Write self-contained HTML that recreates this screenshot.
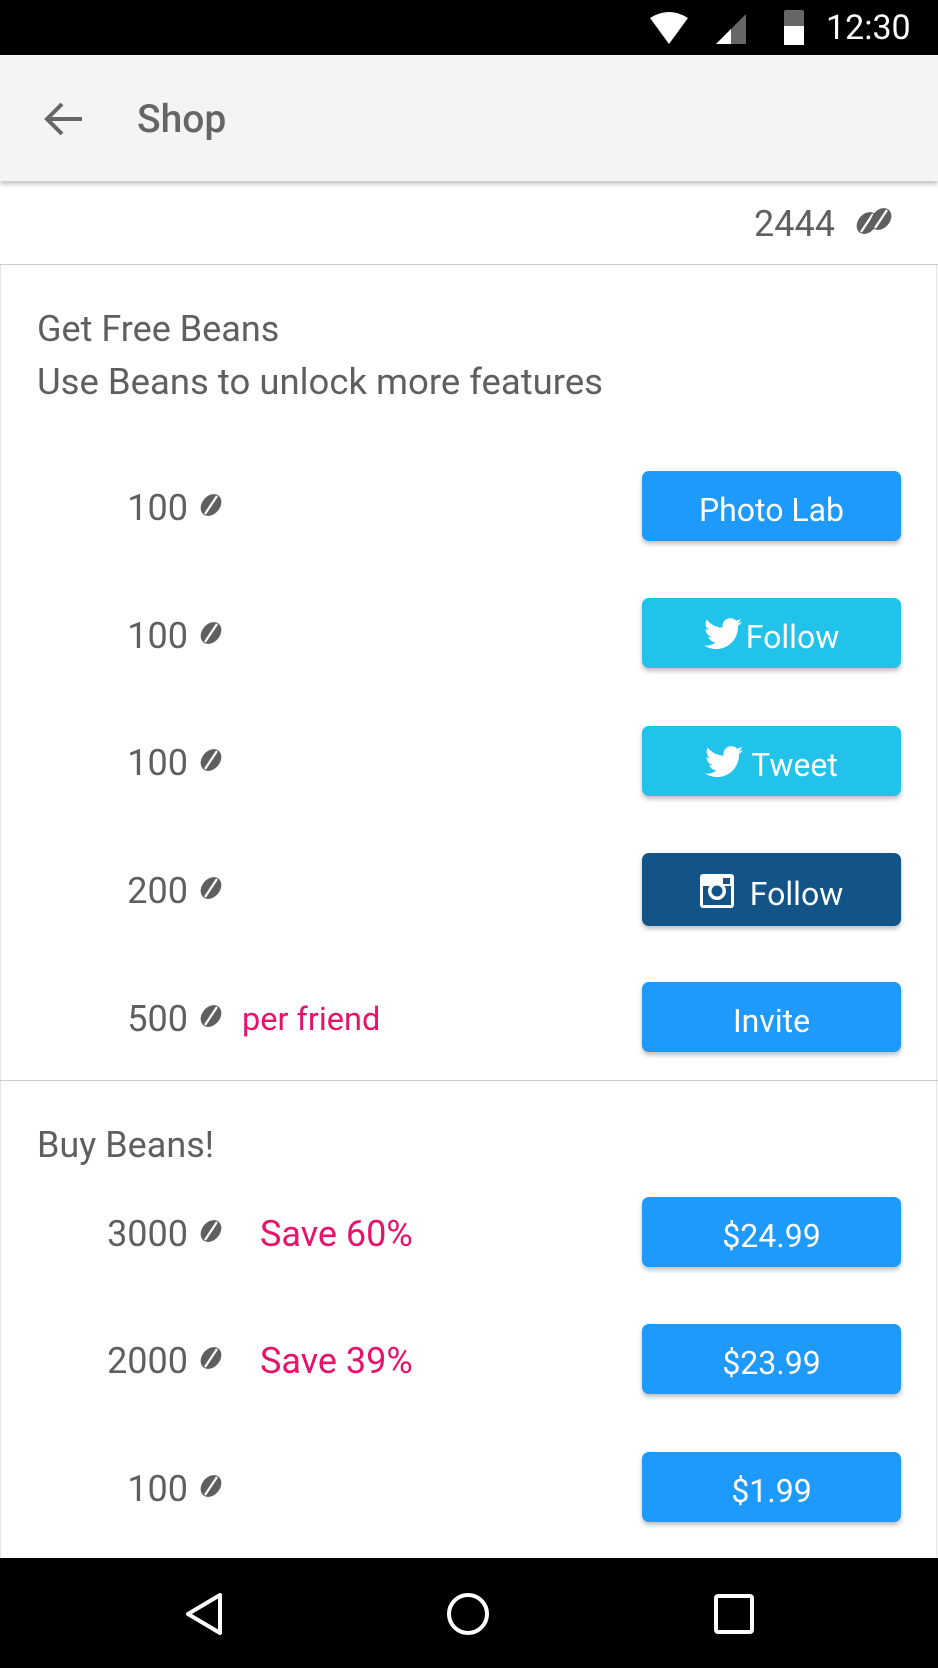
<!DOCTYPE html>
<html><head><meta charset="utf-8"><style>
*{margin:0;padding:0;box-sizing:border-box}
body{width:938px;height:1668px;overflow:hidden;background:#fff;font-family:"Roboto","Liberation Sans",sans-serif;color:#5f5f5f;position:relative}
.abs{position:absolute}
.status{left:0;top:0;width:938px;height:55px;background:#000}
.appbar{left:0;top:55px;width:938px;height:126px;background:#f4f4f4;box-shadow:0 3px 5px rgba(0,0,0,.25)}
.num{font-size:36px;line-height:40px;text-align:right;width:150px;left:38px}
.btn{left:642px;width:259px;height:70px;border-radius:7px;color:#fff;font-size:32px;display:flex;align-items:center;justify-content:center;box-shadow:0 3px 5px rgba(0,0,0,.25);padding-top:8px}
.blue{background:#1e9afc}.tw{background:#22c3eb}.ig{background:#135488}
.pink{color:#e8126b;font-size:36px;line-height:40px}
.nav{left:0;top:1558px;width:938px;height:110px;background:#000}
</style></head><body>
<svg width="0" height="0" style="position:absolute"><defs><g id="b"><ellipse cx="13" cy="11" rx="12" ry="9" transform="rotate(-50 13 11)" fill="#5f5f5f"/><path d="M7 20 L19 2" stroke="#fff" stroke-width="2.2"/></g></defs></svg>
<div class="abs status">
<svg class="abs" style="left:650px;top:12px" width="38" height="32" viewBox="0 0 38 32"><path d="M0 6 Q19 -6 38 6 L19 32 Z" fill="#fff"/></svg>
<svg class="abs" style="left:716px;top:14px" width="30" height="30" viewBox="0 0 30 30"><path d="M30 0 V30 H0 Z" fill="#666"/><path d="M15 15 V30 H0 Z" fill="#fff"/></svg>
<div class="abs" style="left:784px;top:10px;width:20px;height:35px;background:#666;border-radius:2px"></div>
<div class="abs" style="left:784px;top:26px;width:20px;height:19px;background:#fff"></div>
<div class="abs" style="left:826px;top:8px;font-size:34px;color:#fff;line-height:40px">12:30</div>
</div>
<div class="abs appbar">
<svg class="abs" style="left:44px;top:46px" width="40" height="36" viewBox="0 0 40 36"><path d="M38 18 H4 M18 3 L3 18 L18 33" stroke="#666" stroke-width="4" fill="none"/></svg>
<div class="abs" style="left:137px;top:44px;font-size:39px;font-weight:500;color:#666;line-height:40px">Shop</div>
</div>
<div class="abs" style="left:754px;top:204px;font-size:36px;line-height:40px">2444</div>
<svg class="abs" style="left:854px;top:208px" width="42" height="28" viewBox="0 0 42 28"><use href="#b" x="0" y="4"/><use href="#b" x="14" y="0"/></svg>
<div class="abs" style="left:0;top:264px;width:938px;height:1px;background:#ccc"></div>
<div class="abs" style="left:0;top:265px;width:937px;height:1300px;border-left:1px solid #e4e4e4;border-right:1px solid #e4e4e4"></div>
<div class="abs" style="left:37px;top:309px;font-size:36px;line-height:40px">Get Free Beans</div>
<div class="abs" style="left:37px;top:362px;font-size:36.5px;line-height:40px">Use Beans to unlock more features</div>

<div class="abs num" style="top:488px">100</div><svg class="abs" style="left:198px;top:494px" width="26" height="22"><use href="#b"/></svg>
<div class="abs btn blue" style="top:471px">Photo Lab</div>

<div class="abs num" style="top:616px">100</div><svg class="abs" style="left:198px;top:622px" width="26" height="22"><use href="#b"/></svg>
<div class="abs btn tw" style="top:598px"><svg width="38" height="32" viewBox="0 0 24 20" style="margin-right:4px;margin-top:-6px"><path fill="#fff" d="M24 2.4a10 10 0 0 1-2.8.8A5 5 0 0 0 23.3.4a10 10 0 0 1-3.1 1.2A4.9 4.9 0 0 0 11.8 6 14 14 0 0 1 1.7.9a4.9 4.9 0 0 0 1.5 6.6A4.9 4.9 0 0 1 1 6.9a4.9 4.9 0 0 0 3.9 4.9 5 5 0 0 1-2.2.1 4.9 4.9 0 0 0 4.6 3.4A9.9 9.9 0 0 1 0 17.3 14 14 0 0 0 7.5 19.5c9.1 0 14-7.5 14-14v-.6A10 10 0 0 0 24 2.4z"/></svg>Follow</div>

<div class="abs num" style="top:743px">100</div><svg class="abs" style="left:198px;top:749px" width="26" height="22"><use href="#b"/></svg>
<div class="abs btn tw" style="top:726px"><svg width="38" height="32" viewBox="0 0 24 20" style="margin-right:8px;margin-top:-6px"><path fill="#fff" d="M24 2.4a10 10 0 0 1-2.8.8A5 5 0 0 0 23.3.4a10 10 0 0 1-3.1 1.2A4.9 4.9 0 0 0 11.8 6 14 14 0 0 1 1.7.9a4.9 4.9 0 0 0 1.5 6.6A4.9 4.9 0 0 1 1 6.9a4.9 4.9 0 0 0 3.9 4.9 5 5 0 0 1-2.2.1 4.9 4.9 0 0 0 4.6 3.4A9.9 9.9 0 0 1 0 17.3 14 14 0 0 0 7.5 19.5c9.1 0 14-7.5 14-14v-.6A10 10 0 0 0 24 2.4z"/></svg>Tweet</div>

<div class="abs num" style="top:871px">200</div><svg class="abs" style="left:198px;top:877px" width="26" height="22"><use href="#b"/></svg>
<div class="abs btn ig" style="top:853px;height:73px"><svg width="34" height="34" viewBox="0 0 34 34" style="margin-right:16px;margin-top:-6px"><rect x="0" y="0" width="34" height="34" rx="3" fill="#fff"/><rect x="3" y="12" width="28" height="19" fill="#135488"/><circle cx="17" cy="17" r="9" fill="#fff"/><circle cx="17" cy="17" r="5.5" fill="#135488"/><rect x="23" y="4" width="7" height="6" fill="#135488"/></svg>Follow</div>

<div class="abs num" style="top:999px">500</div><svg class="abs" style="left:198px;top:1005px" width="26" height="22"><use href="#b"/></svg>
<div class="abs pink" style="left:242px;top:999px;font-size:32.5px">per friend</div>
<div class="abs btn blue" style="top:982px">Invite</div>

<div class="abs" style="left:0;top:1080px;width:938px;height:1px;background:#ccc"></div>
<div class="abs" style="left:37px;top:1125px;font-size:36px;line-height:40px">Buy Beans!</div>

<div class="abs num" style="top:1214px">3000</div><svg class="abs" style="left:198px;top:1220px" width="26" height="22"><use href="#b"/></svg>
<div class="abs pink" style="left:260px;top:1214px">Save 60%</div>
<div class="abs btn blue" style="top:1197px">$24.99</div>

<div class="abs num" style="top:1341px">2000</div><svg class="abs" style="left:198px;top:1347px" width="26" height="22"><use href="#b"/></svg>
<div class="abs pink" style="left:260px;top:1341px">Save 39%</div>
<div class="abs btn blue" style="top:1324px">$23.99</div>

<div class="abs num" style="top:1469px">100</div><svg class="abs" style="left:198px;top:1475px" width="26" height="22"><use href="#b"/></svg>
<div class="abs btn blue" style="top:1452px">$1.99</div>

<div class="abs nav">
<svg class="abs" style="left:184px;top:34px" width="40" height="44" viewBox="0 0 40 44"><path d="M36 3 L4 22 L36 41 Z" stroke="#fff" stroke-width="4" fill="none" stroke-linejoin="round"/></svg>
<svg class="abs" style="left:446px;top:34px" width="44" height="44" viewBox="0 0 44 44"><circle cx="22" cy="22" r="19" stroke="#fff" stroke-width="4" fill="none"/></svg>
<svg class="abs" style="left:714px;top:36px" width="40" height="40" viewBox="0 0 40 40"><rect x="2" y="2" width="36" height="36" rx="2" stroke="#fff" stroke-width="4" fill="none"/></svg>
</div>
</body></html>
